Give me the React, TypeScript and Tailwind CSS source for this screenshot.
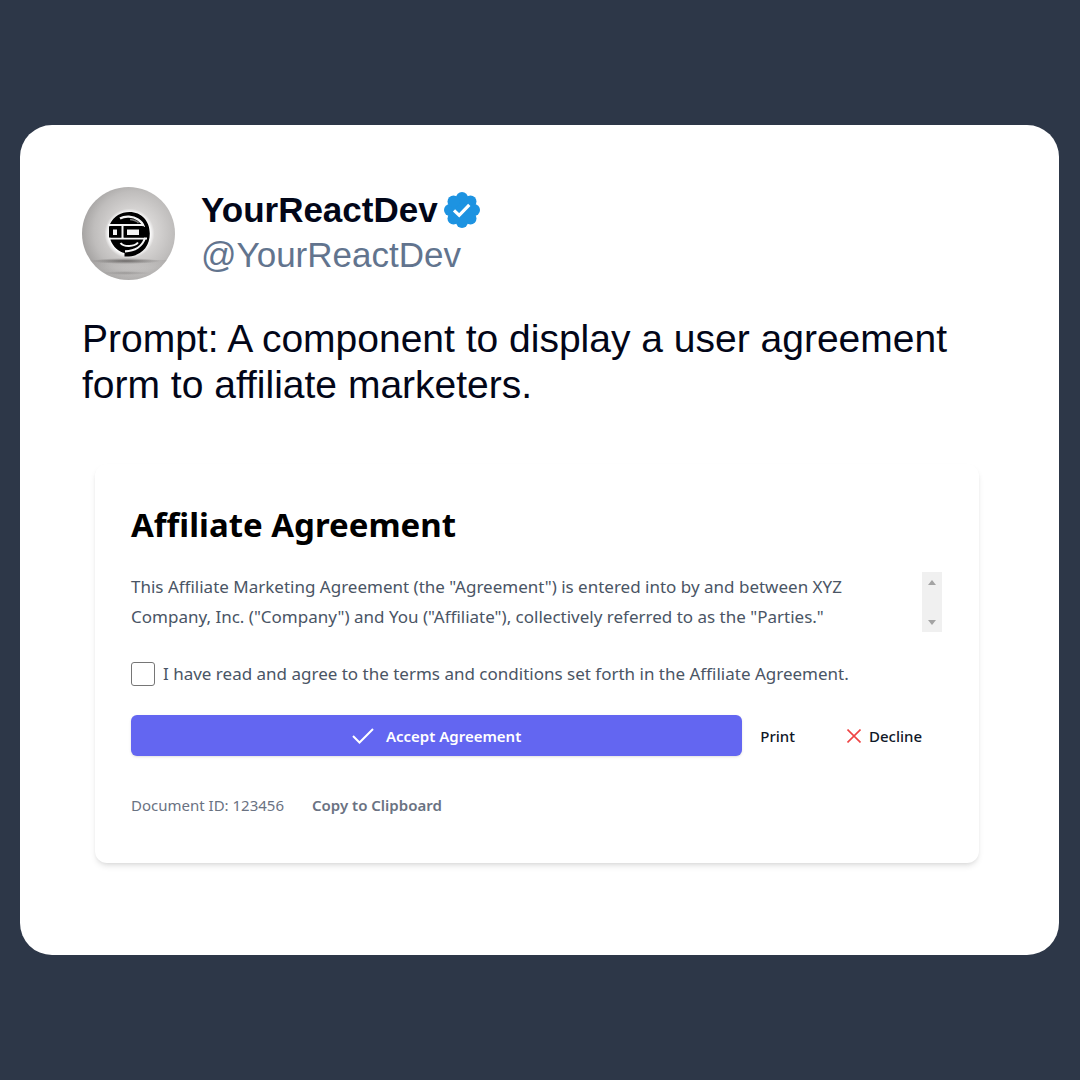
import React, { useState } from "react";

const DOCUMENT_ID = "123456";

const Avatar: React.FC = () => (
  <svg viewBox="0 0 93 93" className="size-[93px] shrink-0" role="img" aria-label="YourReactDev">
    <defs>
      <radialGradient id="backdrop" cx="56%" cy="48%" r="62%">
        <stop offset="0.35" stopColor="#d8d6d5" />
        <stop offset="0.7" stopColor="#bfbdbc" />
        <stop offset="1" stopColor="#9a9897" />
      </radialGradient>
      <linearGradient id="floor" x1="0" y1="0" x2="0" y2="1">
        <stop offset="0" stopColor="#8f8c8b" stopOpacity="0.5" />
        <stop offset="0.4" stopColor="#bab8b7" stopOpacity="0.4" />
        <stop offset="1" stopColor="#bab8b7" stopOpacity="0.4" />
      </linearGradient>
      <radialGradient id="glow">
        <stop offset="0.82" stopColor="#fff" />
        <stop offset="1" stopColor="#fff" stopOpacity="0" />
      </radialGradient>
      <radialGradient id="shade">
        <stop offset="0" stopColor="#4a4746" stopOpacity="0.7" />
        <stop offset="1" stopColor="#4a4746" stopOpacity="0" />
      </radialGradient>
      <clipPath id="round">
        <circle cx="46.5" cy="46.5" r="46.5" />
      </clipPath>
    </defs>
    <g clipPath="url(#round)">
      <rect width="93" height="93" fill="url(#backdrop)" />
      <rect y="73" width="93" height="20" fill="url(#floor)" opacity="0.5" />
      <ellipse cx="44" cy="74" rx="34" ry="3" fill="url(#shade)" />
      <ellipse cx="44" cy="86" rx="24" ry="2" fill="url(#shade)" opacity="0.4" />
      <circle cx="47.5" cy="46.5" r="25" fill="url(#glow)" />
      {/* Emblem: disc, visor with two windows, trailing outer ring */}
      <path d="M28 37C32 29 39 25 47.500 25 59.500 25 67.800 34 67.800 46.500S60 68.500 47 69.500h-4.500V66C37 65 31 60 28.500 53z" fill="#000" />
      <path d="M38 31.500c5-3 13-2.500 18 1 3 2 5 4.500 6 7.500" fill="none" stroke="#f5f5f5" strokeWidth="2.200" />
      <path d="M63 51c-2.500 8-10 13-20 13.300" fill="none" stroke="#f5f5f5" strokeWidth="2.200" />
      <path d="M48 32.500c4 .5 7 1.500 8.500 3.500" fill="none" stroke="#777" strokeWidth="1.500" />
      <path d="M26 38h36M26 51.500h39" stroke="#f5f5f5" strokeWidth="2" />
      <path d="M27 39.200h12.700v11.200H27zM41.500 39.200H62v11.200H41.500z" fill="#000" />
      <path d="M31 42.500h4v5.500h-4zM45 42.500h12v5.500H45z" fill="#f5f5f5" />
      <path d="M40.500 38v13" stroke="#f5f5f5" strokeWidth="2" />
      <path d="M38.500 56c3 4 14 4 17.500-.500" fill="none" stroke="#f5f5f5" strokeWidth="2" />
    </g>
  </svg>
);

const VerifiedBadge: React.FC = () => (
  <svg viewBox="0 0 36 36" className="size-9 shrink-0" role="img" aria-label="Verified">
    <g fill="#1d93e1">
      <circle cx="18" cy="18" r="14.500" />
      <circle cx="18" cy="6" r="6" />
      <circle cx="26.500" cy="9.500" r="6" />
      <circle cx="30" cy="18" r="6" />
      <circle cx="26.500" cy="26.500" r="6" />
      <circle cx="18" cy="30" r="6" />
      <circle cx="9.500" cy="26.500" r="6" />
      <circle cx="6" cy="18" r="6" />
      <circle cx="9.500" cy="9.500" r="6" />
    </g>
    <path d="M10 18.300l5.200 5L25.300 12.800" fill="none" stroke="#fff" strokeWidth="3.200" />
  </svg>
);

const AgreementCard: React.FC = () => {
  const [agreed, setAgreed] = useState(false);

  const copyId = () => {
    navigator.clipboard?.writeText(DOCUMENT_ID);
  };

  return (
    <section className="rounded-xl bg-white pt-10 pr-[37px] pb-[45px] pl-9 font-['Noto_Sans',sans-serif] shadow-md">
      <h2 className="text-[33px] leading-[42px] font-bold text-black">Affiliate Agreement</h2>

      <div className="mt-[26px] flex justify-between text-[17px] leading-[30px] text-gray-600">
        <p className="max-w-[740px] flex-1">
          This Affiliate Marketing Agreement (the "Agreement") is entered into by and between XYZ
          Company, Inc. ("Company") and You ("Affiliate"), collectively referred to as the "Parties."
        </p>
        <div className="flex w-5 shrink-0 flex-col justify-between bg-[#f0f0f0]">
          <button type="button" aria-label="Scroll up" className="flex h-5 items-center justify-center">
            <svg viewBox="0 0 8 5" className="h-[5px] w-2" fill="#a3a3a3"><path d="M0 5l4-5 4 5z" /></svg>
          </button>
          <button type="button" aria-label="Scroll down" className="flex h-5 items-center justify-center">
            <svg viewBox="0 0 8 5" className="h-[5px] w-2" fill="#a3a3a3"><path d="M0 0l4 5 4-5z" /></svg>
          </button>
        </div>
      </div>

      <div className="mt-7 flex items-center gap-2">
        <input
          id="agree"
          type="checkbox"
          checked={agreed}
          onChange={(e) => setAgreed(e.target.checked)}
          className="size-6 shrink-0 appearance-none rounded-[3px] border border-[#767676] bg-white checked:bg-[#6366f1]"
        />
        <label htmlFor="agree" className="text-[17px] leading-[28px] text-gray-600">
          I have read and agree to the terms and conditions set forth in the Affiliate Agreement.
        </label>
      </div>

      <div className="mt-[27px] flex items-center text-[15px] leading-6">
        <button type="button" className="flex h-[41px] flex-1 items-center justify-center gap-3 rounded-md bg-[#6366f1] font-semibold text-white shadow-sm">
          <svg viewBox="0 0 22 16" className="h-4 w-[22px]" fill="none" stroke="currentColor" strokeWidth="2">
            <path d="M1 8l6.500 6.500L21 1" />
          </svg>
          Accept Agreement
        </button>
        <button type="button" className="px-[18px] font-medium text-gray-900">Print</button>
        <button type="button" className="ml-[34px] flex items-center gap-2 pr-5 font-medium text-gray-900">
          <svg viewBox="0 0 14 14" className="size-[14px]" fill="none" stroke="#ef4444" strokeWidth="1.600">
            <path d="M.5.5l13 13M13.500.5l-13 13" />
          </svg>
          Decline
        </button>
      </div>

      <div className="mt-9 flex items-center gap-7 text-[15px] leading-[26px] text-gray-500">
        <span>Document ID: {DOCUMENT_ID}</span>
        <button type="button" onClick={copyId} className="font-semibold">Copy to Clipboard</button>
      </div>
    </section>
  );
};

const App: React.FC = () => {
  return (
    <main className="flex min-h-screen items-center bg-[#2d3748] pr-[21px] pl-5">
      <article className="w-full rounded-[32px] bg-white px-[62px] pt-[62px] pb-[92px] font-['Liberation_Sans',sans-serif]">
        <header className="flex items-start gap-[26px]">
          <Avatar />
          <div>
            <div className="flex items-center gap-1.5">
              <h1 className="text-[35px] leading-[45px] font-bold text-slate-950">YourReactDev</h1>
              <VerifiedBadge />
            </div>
            <p className="text-[35px] leading-[45px] text-slate-500">@YourReactDev</p>
          </div>
        </header>

        <p className="mt-9 text-[39px] leading-[46px] text-slate-950">
          Prompt: A component to display a user agreement form to affiliate marketers.
        </p>

        <div className="mt-14 pr-[18px] pl-[13px]">
          <AgreementCard />
        </div>
      </article>
    </main>
  );
};

export default App;
